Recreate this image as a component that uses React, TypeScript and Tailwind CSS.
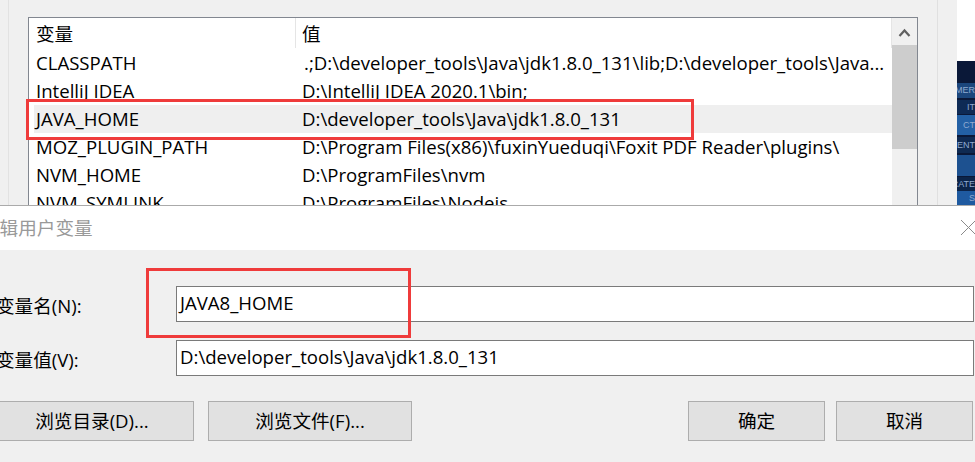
import React from "react";

const rows: [string, string, boolean][] = [
  ["CLASSPATH", ".;D:\\developer_tools\\Java\\jdk1.8.0_131\\lib;D:\\developer_tools\\Java...", false],
  ["IntelliJ IDEA", "D:\\IntelliJ IDEA 2020.1\\bin;", false],
  ["JAVA_HOME", "D:\\developer_tools\\Java\\jdk1.8.0_131", true],
  ["MOZ_PLUGIN_PATH", "D:\\Program Files(x86)\\fuxinYueduqi\\Foxit PDF Reader\\plugins\\", false],
  ["NVM_HOME", "D:\\ProgramFiles\\nvm", false],
  ["NVM_SYMLINK", "D:\\ProgramFiles\\Nodejs", false],
];

function Block({ h, bg, text }: { h: string; bg: string; text?: string }) {
  return (
    <div className={`${h} ${bg} flex items-center justify-end overflow-hidden whitespace-nowrap text-[9px] leading-none text-[#8fa9cf] font-['Liberation_Sans',sans-serif]`}>
      {text}
    </div>
  );
}

export default function App() {
  return (
    <div className="relative w-[975px] h-[462px] overflow-hidden bg-[#f0f0f0] text-[18.6px] text-black font-['Open_Sans','Noto_Sans_CJK_SC',sans-serif]">
      {/* background window */}
      <div className="flex h-[205px] overflow-hidden">
        <div className="w-[957px] flex bg-[#f0f0f0]">
          <div className="w-[9px] shrink-0 border-r border-[#e2e2e2]" />
          <div className="ml-[19px] mt-[17px] w-[890px] h-[220px] shrink-0 border border-[#828790] bg-white flex">
            <div className="flex-1 flex flex-col min-w-0">
              <div className="h-[31px] flex">
                <div className="w-[266px] pl-[7px] flex items-center">变量</div>
                <div className="w-px h-[30px] bg-[#e5e5e5]" />
                <div className="flex-1 pl-[6px] flex items-center">值</div>
                <div className="w-px h-[30px] bg-[#e5e5e5]" />
              </div>
              {rows.map(([name, value, sel]) => (
                <div
                  key={name}
                  className={`ml-[5px] h-[28px] flex items-center whitespace-nowrap ${sel ? "bg-[#efefef]" : ""}`}
                >
                  <div className="w-[266px] shrink-0 pl-[2px] overflow-hidden">{name}</div>
                  <div className={`flex-1 overflow-hidden ${name === "CLASSPATH" ? "pl-[4px]" : "pl-[2px]"}`}>{value}</div>
                </div>
              ))}
            </div>
            <div className="w-[25px] shrink-0 bg-[#f0f0f0] flex flex-col">
              <div className="h-[27px]">
                <svg width="25" height="27" viewBox="0 0 25 27">
                  <polyline points="7.5,18 12.5,12.5 17.5,18" fill="none" stroke="#606060" strokeWidth="2.2" />
                </svg>
              </div>
              <div className="h-[104px] bg-[#cdcdcd]" />
            </div>
          </div>
          <div className="ml-[19px] w-px shrink-0 bg-[#e0e0e0]" />
        </div>
        <div className="w-[18px] flex flex-col">
          <div className="h-[61px] bg-white" />
          <Block h="h-[22px]" bg="bg-[#0a1838]" />
          <Block h="h-[15px]" bg="bg-[#1b467c]" text="MER" />
          <Block h="h-[2px]" bg="bg-[#0a1838]" />
          <Block h="h-[14px]" bg="bg-[#0e2a55]" text="IT" />
          <Block h="h-[1px]" bg="bg-[#0a1838]" />
          <Block h="h-[20px]" bg="bg-[#2360a5]" text="CT" />
          <Block h="h-[2px]" bg="bg-[#0a1838]" />
          <Block h="h-[16px]" bg="bg-[#0f2a52]" text="EMENT" />
          <Block h="h-[2px]" bg="bg-[#0a1838]" />
          <Block h="h-[21px]" bg="bg-[#1d5190]" />
          <Block h="h-[1px]" bg="bg-[#0a1838]" />
          <Block h="h-[14px]" bg="bg-[#0c2449]" text="RATE" />
          <Block h="h-[14px]" bg="bg-[#1f5aa0]" text="S" />
        </div>
      </div>

      {/* dialog */}
      <div className="border-t border-[#aaaaaa]">
        <div className="h-[44px] bg-white flex items-center whitespace-nowrap">
          <span className="ml-[-19px] text-[#999999]">编辑用户变量</span>
        </div>
        <div className="h-[212px] bg-[#f0f0f0] flex flex-col">
          <div className="mt-[36px] flex items-center h-[36px]">
            <div className="ml-[-4px] w-[180px] pt-[4px] whitespace-nowrap">变量名(N):</div>
            <div className="w-[798px] h-[36px] border border-[#7a7a7a] bg-white flex items-center pl-[3px] pb-[3px] whitespace-nowrap">
              JAVA8_HOME
            </div>
          </div>
          <div className="mt-[18px] flex items-center h-[36px]">
            <div className="ml-[-4px] w-[180px] pt-[4px] whitespace-nowrap">变量值(V):</div>
            <div className="w-[798px] h-[36px] border border-[#7a7a7a] bg-white flex items-center pl-[3px] pb-[3px] whitespace-nowrap">
              D:\developer_tools\Java\jdk1.8.0_131
            </div>
          </div>
          <div className="mt-[25px] flex h-[40px]">
            <button className="ml-[-10px] w-[204px] h-[40px] border border-[#adadad] bg-[#e1e1e1] flex items-center justify-center whitespace-nowrap">
              浏览目录(D)...
            </button>
            <button className="ml-[14px] w-[204px] h-[40px] border border-[#adadad] bg-[#e1e1e1] flex items-center justify-center whitespace-nowrap">
              浏览文件(F)...
            </button>
            <div className="flex-1" />
            <button className="w-[137px] h-[40px] border border-[#adadad] bg-[#e1e1e1] flex items-center justify-center">
              确定
            </button>
            <button className="ml-[11px] mr-[2px] w-[137px] h-[40px] border border-[#adadad] bg-[#e1e1e1] flex items-center justify-center">
              取消
            </button>
          </div>
        </div>
      </div>

      {/* close X */}
      <svg className="absolute left-[960px] top-[219px]" width="17" height="17" viewBox="0 0 17 17">
        <line x1="1" y1="1" x2="16" y2="16" stroke="#8a8a8a" strokeWidth="1" />
        <line x1="16" y1="1" x2="1" y2="16" stroke="#8a8a8a" strokeWidth="1" />
      </svg>

      {/* red annotation boxes */}
      <div className="absolute left-[26px] top-[99px] w-[668px] h-[41px] border-[3px] border-[#ef3b3b]" />
      <div className="absolute left-[146px] top-[268px] w-[265px] h-[70px] border-[3px] border-[#ef3b3b]" />
    </div>
  );
}
